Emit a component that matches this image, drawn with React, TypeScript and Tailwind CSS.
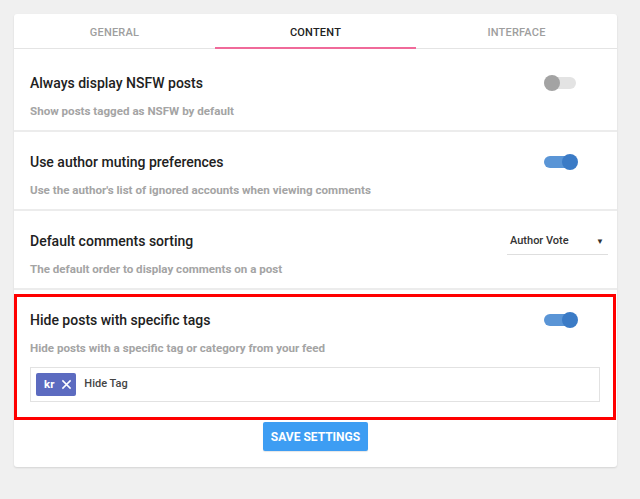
import { useState } from 'react';

function Toggle({ on }: { on: boolean }) {
  return (
    <div className="relative w-[34px] h-4 mr-[23px]">
      <div
        className={`absolute left-0 top-[2px] h-3 w-8 rounded-full ${
          on ? 'bg-[#5a95d6]' : 'bg-[#e3e3e3]'
        }`}
      />
      <div
        className={`absolute top-0 h-4 w-4 rounded-full ${
          on ? 'right-0 bg-[#3b7bc6]' : 'left-0 bg-[#a3a3a3]'
        }`}
      />
    </div>
  );
}

function Row({
  title,
  desc,
  right,
}: {
  title: string;
  desc: string;
  right: React.ReactNode;
}) {
  return (
    <div className="px-4 pt-5 pb-[11px] border-b-2 border-[#ececec]">
      <div className="flex items-center justify-between h-5">
        <div className="text-[14px] font-medium text-[#212121] leading-5">{title}</div>
        {right}
      </div>
      <div className="mt-[10px] text-[11.6px] font-bold text-[#a4a4a4] leading-4">{desc}</div>
    </div>
  );
}

export default function App() {
  const [tab] = useState('content');
  const tabs = ['general', 'content', 'interface'];

  return (
    <div
      className="min-h-[499px] w-[640px] bg-[#f0f0f0] pt-[14px] pl-[14px]"
      style={{ fontFamily: 'Roboto, "Liberation Sans", sans-serif' }}
    >
      <div className="w-[603px] bg-white rounded-[3px] shadow-[0_1px_2px_rgba(0,0,0,0.12)]">
        {/* Tabs */}
        <div className="grid grid-cols-3 border-b border-[#e4e4e4]">
          {tabs.map((t) => (
            <div
              key={t}
              className={`h-[35px] -mb-px flex items-center justify-center pt-[6px] text-[11px] font-medium uppercase tracking-[0.2px] ${
                t === tab
                  ? 'text-[#222] border-b-2 border-[#f06a9a]'
                  : 'text-[#9e9e9e] border-b-2 border-transparent'
              }`}
            >
              {t}
            </div>
          ))}
        </div>

        <div className="pt-[4px]">
          <Row
            title="Always display NSFW posts"
            desc="Show posts tagged as NSFW by default"
            right={<Toggle on={false} />}
          />
          <Row
            title="Use author muting preferences"
            desc="Use the author's list of ignored accounts when viewing comments"
            right={<Toggle on={true} />}
          />
          <Row
            title="Default comments sorting"
            desc="The default order to display comments on a post"
            right={
              <div className="w-[101px] h-[26px] -mb-[2px] mr-[-7px] flex items-center justify-between pl-[3px] pr-[4px] border-b border-[#dedede] text-[11px] font-medium text-[#333]">
                <span>Author Vote</span>
                <span className="text-[8px]">▼</span>
              </div>
            }
          />
        </div>

        {/* Highlighted section */}
        <div className="mt-[4px] mr-[1px] border-[3px] border-[#ff0000] px-[13px] pt-[13px] pb-[15px]">
          <div className="flex items-center justify-between h-5">
            <div className="text-[14px] font-medium text-[#212121] leading-5">
              Hide posts with specific tags
            </div>
            <div className="-mr-px">
              <Toggle on={true} />
            </div>
          </div>
          <div className="mt-[10px] text-[11.6px] font-bold text-[#a4a4a4] leading-4">
            Hide posts with a specific tag or category from your feed
          </div>
          <div className="mt-[11px] h-[35px] border border-[#e2e2e2] flex items-center px-[5px] gap-[8px]">
            <div className="h-[23px] bg-[#5c6bc0] text-white rounded-[2px] flex items-center pl-[8px] pr-[4px] gap-[7px]">
              <span className="text-[11.5px] font-bold">kr</span>
              <svg width="11" height="11" viewBox="0 0 12 12">
                <path d="M1.5 1.5 L10.5 10.5 M10.5 1.5 L1.5 10.5" stroke="white" strokeWidth="1.6" />
              </svg>
            </div>
            <span className="text-[11px] font-medium text-[#444]">Hide Tag</span>
          </div>
        </div>

        <div className="flex justify-center pt-[2px] pb-[16px]">
          <button className="h-[29px] w-[105px] bg-[#3d9df3] text-white text-[12px] font-bold uppercase rounded-[2px] shadow-[0_1px_1px_rgba(0,0,0,0.1)]">
            Save Settings
          </button>
        </div>
      </div>
    </div>
  );
}
